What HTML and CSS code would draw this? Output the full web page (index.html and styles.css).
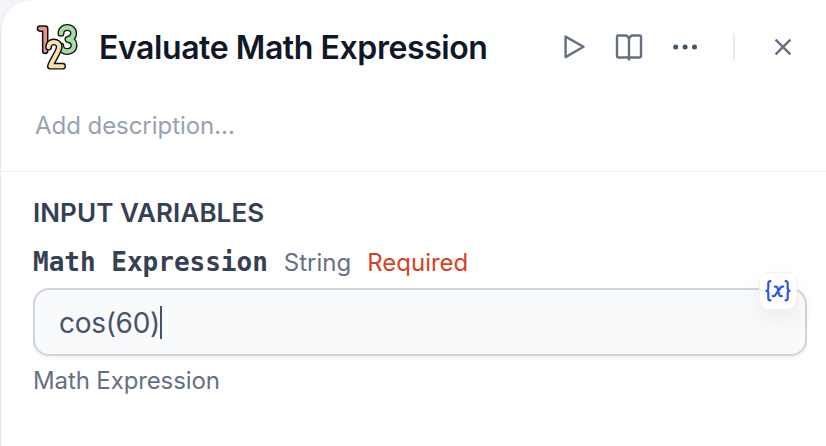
FILE: index.html
```html
<!DOCTYPE html>
<html lang="en">
<head>
<meta charset="utf-8">
<title>Evaluate Math Expression</title>
<link rel="stylesheet" href="styles.css">
</head>
<body>
<main class="panel">
  <header class="head">
    <div class="title-row">
      <svg class="tool-icon" width="44" height="50" viewBox="35 22 44 50" fill="none" stroke-linecap="round" stroke-linejoin="round">
        <path d="M40 28.6h5.2V51" stroke="#111" stroke-width="6.6"/>
        <path d="M40 28.6h5.2V51" stroke="#ea8f8f" stroke-width="3.6"/>
        <path d="M61 33.2C61 25.4 73.6 25.7 73.6 33.3c0 3.4-2.6 5.4-5.6 6.2 4.2.4 6 2.8 6 5.7 0 8-13 8.4-13.2.8" stroke="#111" stroke-width="7"/>
        <path d="M61 33.2C61 25.4 73.6 25.7 73.6 33.3c0 3.4-2.6 5.4-5.6 6.2 4.2.4 6 2.8 6 5.7 0 8-13 8.4-13.2.8" stroke="#a3dda3" stroke-width="4.4"/>
        <path d="M48.6 47.2c-.3-6.8 10.6-7.2 10.6-.2 0 4.2-6 11.6-8.8 19.2h12.2" stroke="#111" stroke-width="6.8"/>
        <path d="M48.6 47.2c-.3-6.8 10.6-7.2 10.6-.2 0 4.2-6 11.6-8.8 19.2h12.2" stroke="#fae0af" stroke-width="4"/>
      </svg>
      <h1 class="title">Evaluate Math Expression</h1>
      <div class="actions">
        <svg class="icon" width="22" height="26" viewBox="0 0 22 26"><path d="M2.6 2.6v20.500L20.500 12.800z"/></svg>
        <svg class="icon book" width="28" height="28" viewBox="0 0 28 28"><path d="M14 27.500V5.800M14 5.800Q12.800 2.500 10.400 2.500H3.200Q2 2.500 2 3.700v19.600Q2 24.500 3.200 24.500h21.600q1.200 0 1.200-1.200V3.700Q26 2.500 24.800 2.500h-7.200Q15.200 2.500 14 5.800z"/></svg>
        <svg class="dots" width="26" height="6" viewBox="0 0 26 6"><circle cx="3.700" cy="3" r="2.500"/><circle cx="13.100" cy="3" r="2.500"/><circle cx="22.500" cy="3" r="2.500"/></svg>
        <span class="divider"></span>
        <svg class="icon close" width="18" height="18" viewBox="0 0 18 18"><path d="M1.600 1.600l14.800 14.800M16.400 1.600L1.600 16.400"/></svg>
      </div>
    </div>
    <p class="description">Add description...</p>
  </header>
  <section class="inputs">
    <h2 class="section-title">INPUT VARIABLES</h2>
    <div class="label-row">
      <span class="name">Math Expression</span>
      <span class="type">String</span>
      <span class="required">Required</span>
    </div>
    <div class="field">
      <span class="value">cos(60)</span><span class="caret"></span>
      <span class="variable">
        <svg width="28" height="24" viewBox="0 0 28 24"><path d="M6.400 2.200Q4.300 2.200 4.300 4.600v5Q4.300 11.600 2.500 11.800q1.800.2 1.800 2.200v5q0 2.400 2.100 2.400M21.600 2.200q2.100 0 2.100 2.400v5q0 2 1.800 2.200-1.800.2-1.800 2.200v5q0 2.400-2.100 2.400"/><path d="M10.800 7.600h1.300q1 0 1.300 1l1.800 7.200q.3 1.300 1.500 1.300h1.200M19.200 7.600h-.8q-1 0-1.700.9l-5.500 7.700q-.7.900-1.700.9h-.8"/></svg>
      </span>
    </div>
    <p class="help">Math Expression</p>
  </section>
</main>
</body>
</html>
```
FILE: styles.css
```css
* { box-sizing: border-box; }
body { margin: 0; background: #f2f4f7; font-family: Inter, sans-serif; }
h1, h2, p { margin: 0; }
.panel {
  height: 446px;
  overflow: hidden;
  background: #fff;
  border-left: 1px solid #e7e9ed;
  border-top-left-radius: 32px;
}
.head { height: 172px; border-bottom: 1px solid #eff0f3; padding: 22px 34px 0 34px; }
.title-row { display: flex; align-items: center; height: 50px; }
.tool-icon { flex: none; }
.title { margin-left: 20px; padding-top: 2px; font-size: 32px; line-height: 48px; font-weight: 600; color: #101828; letter-spacing: -0.42px; white-space: nowrap; }
.actions { display: flex; align-items: center; margin-left: auto; }
.icon { fill: none; stroke: #667085; stroke-width: 2.4; stroke-linejoin: round; }
.book { margin-left: 30px; }
.dots { margin-left: 29px; fill: #475467; }
.divider { width: 2px; height: 28px; margin-left: 35px; background: #eaebed; }
.close { margin-left: 39px; }
.description { margin-top: 38px; font-size: 24px; line-height: 32px; letter-spacing: -0.05px; color: #98a2b3; }
.inputs { padding: 25px 19px 0 32px; }
.section-title { font-size: 26px; line-height: 32px; font-weight: 600; letter-spacing: 0.08px; color: #354052; }
.label-row { display: flex; align-items: baseline; height: 36px; margin-top: 15px; font-size: 24px; line-height: 36px; white-space: nowrap; }
.name { font: bold 26px/36px "DejaVu Sans Mono", monospace; color: #354052; }
.type { margin-left: 16px; color: #667085; }
.required { margin-left: 16px; color: #d93f20; }
.field {
  position: relative;
  display: flex;
  align-items: center;
  height: 68px;
  margin-top: 8px;
  padding: 0 24px;
  border: 2px solid #d0d5dc;
  border-radius: 16px;
  background: #f9fafb;
  box-shadow: 0 2px 4px rgba(16, 24, 40, .06);
  font-size: 28px;
  color: #475467;
}
.value { padding-top: 2px; letter-spacing: -0.3px; }
.caret { width: 2px; height: 33px; background: #475467; }
.variable {
  position: absolute;
  top: -18px;
  right: 8px;
  display: grid;
  place-items: center;
  width: 38px;
  height: 38px;
  border: 1px solid #f0f1f4;
  border-radius: 10px;
  background: #fff;
  box-shadow: 0 10px 24px rgba(16, 24, 40, .06);
}
.variable svg { fill: none; stroke: #2859e6; stroke-width: 2.2; stroke-linecap: round; stroke-linejoin: round; }
.help { margin-top: 9px; font-size: 24px; line-height: 32px; letter-spacing: -0.12px; color: #667085; }
```
